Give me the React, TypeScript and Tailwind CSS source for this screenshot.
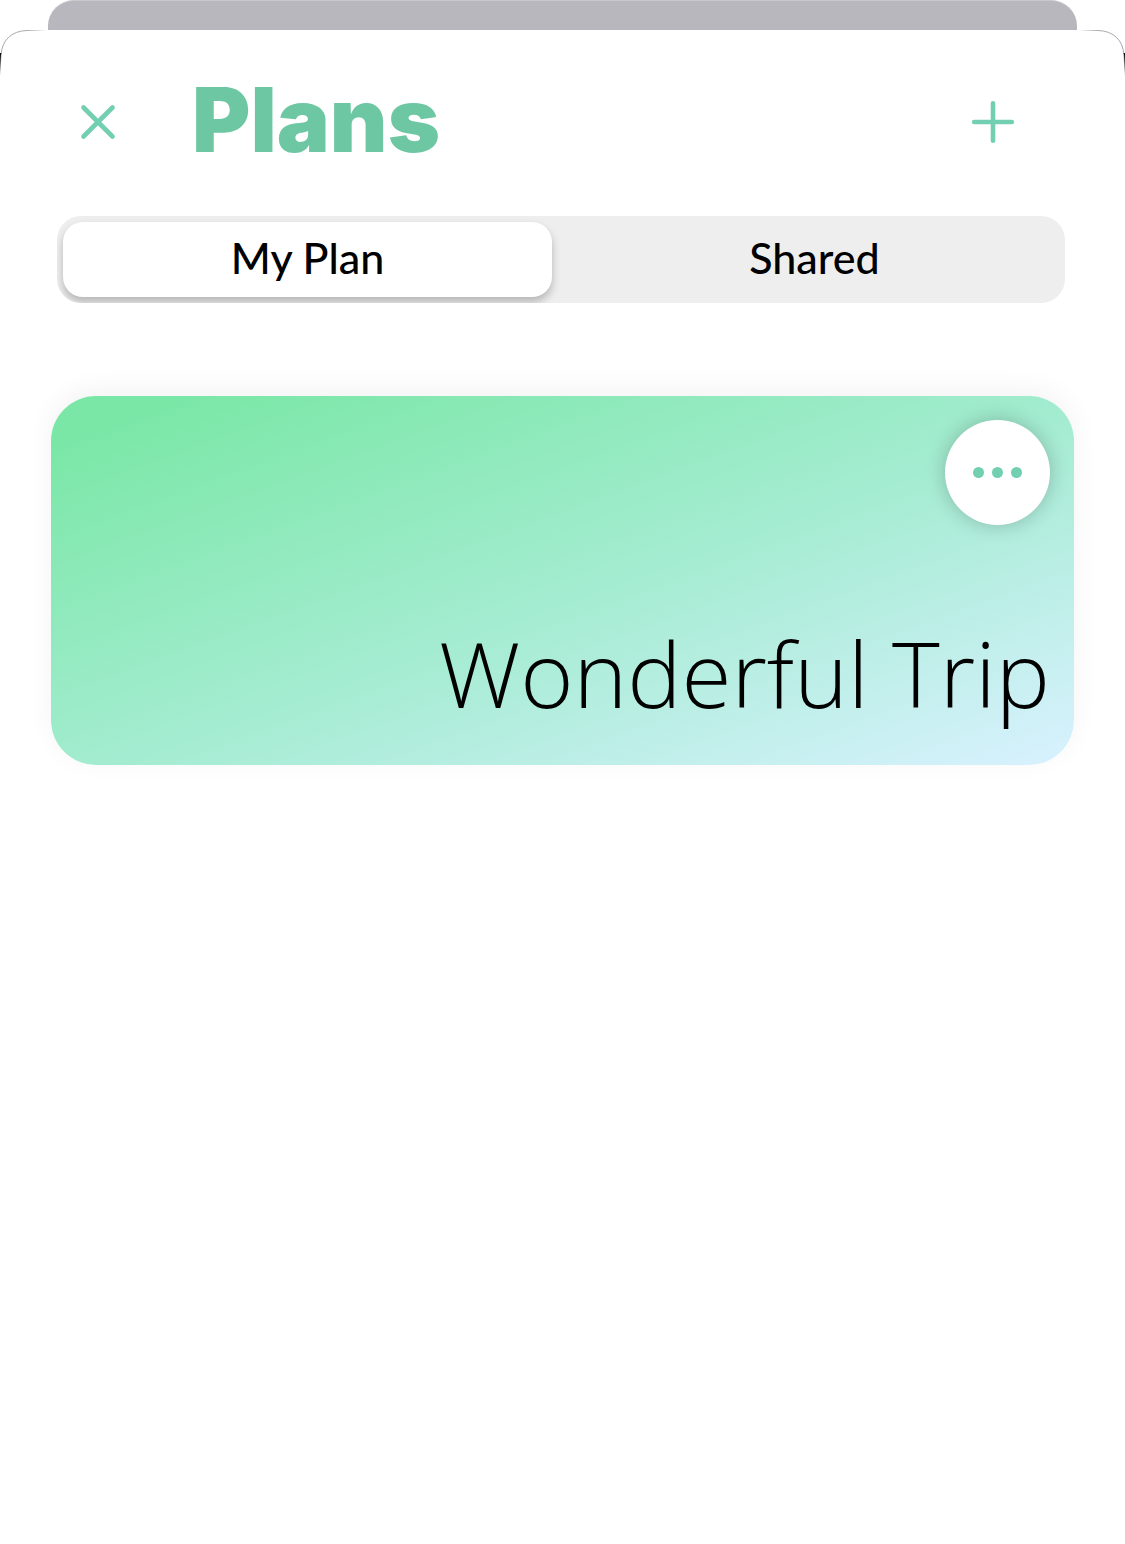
import React, { useState } from "react";

const tabs = ["My Plan", "Shared"];

function SheetCorner({ side }: { side: "left" | "right" }) {
  const id = "edge-" + side;
  return (
    <svg
      aria-hidden="true"
      viewBox="0 0 48 48"
      className={
        side === "left"
          ? "pointer-events-none absolute top-0 left-0 size-12"
          : "pointer-events-none absolute top-0 right-0 size-12 -scale-x-100"
      }
      fill="none"
    >
      <defs>
        <linearGradient id={id} x1="0" y1="0" x2="0" y2="1">
          <stop offset="0" stopColor="#000000" />
          <stop offset="1" stopColor="#000000" stopOpacity="0" />
        </linearGradient>
        <linearGradient id={id + "-top"} gradientUnits="userSpaceOnUse" x1="26" y1="0" x2="46" y2="0">
          <stop offset="0" stopColor="#a8a8a8" />
          <stop offset="1" stopColor="#a8a8a8" stopOpacity="0" />
        </linearGradient>
      </defs>
      <path d="M1.2 24C2 11 11 .8 27 .5H46" stroke={"url(#" + id + "-top)"} />
      <path d="M0 23H1.3L.6 46H0Z" fill={"url(#" + id + ")"} />
    </svg>
  );
}

export default function App() {
  const [active, setActive] = useState("My Plan");
  return (
    <div className="min-h-screen bg-white font-['Lato','Liberation_Sans',sans-serif] text-black">
      <div className="mx-12 h-[30px] rounded-t-[26px] border-t border-[#c9c8cc] bg-[#b8b7bd]" />
      <main className="relative rounded-t-[30px] bg-white px-[51px] pt-[39px]">
        <SheetCorner side="left" />
        <SheetCorner side="right" />
        <header className="flex h-[106px] items-center pr-[54px] pl-[24px]">
          <button aria-label="Close" className="flex size-[46px] items-center justify-center">
            <svg viewBox="0 0 36 36" className="size-9" fill="none" stroke="#72cfb1" strokeWidth="4.6" strokeLinecap="round">
              <path d="M3.5 3.5 32.5 32.5M32.5 3.5 3.5 32.5" />
            </svg>
          </button>
          <h1 className="mb-1 ml-[71px] flex-1 font-['Inter','Liberation_Sans',sans-serif] text-[89px] leading-[102px] font-black text-[#6dc7a2]">
            Plans
          </h1>
          <button aria-label="Add plan" className="flex size-[54px] items-center justify-center">
            <svg viewBox="0 0 44 44" className="size-11" fill="none" stroke="#72cfb1" strokeWidth="4.6" strokeLinecap="round">
              <path d="M22 3.2V40.8M3.2 22H40.8" />
            </svg>
          </button>
        </header>
        <div className="mt-[41px] mr-[9px] ml-[6px] flex h-[87px] gap-[18px] overflow-hidden rounded-[24px] bg-[#eeeeee] p-[6px]">
          {tabs.map((t) => (
            <button
              key={t}
              aria-pressed={active === t}
              onClick={() => setActive(t)}
              className={
                active === t
                  ? "flex-1 rounded-[20px] bg-white pb-[4px] text-[43px] leading-none font-medium shadow-[0_5px_8px_rgba(0,0,0,0.24)]"
                  : "flex-1 pb-[4px] text-[43px] leading-none font-medium"
              }
            >
              {t}
            </button>
          ))}
        </div>
        <article className="mt-[93px] flex h-[369px] flex-col items-end justify-between rounded-[45px] bg-[linear-gradient(160deg,#7ae7a6_6%,#a5ecd2_54%,#d6f1fd_98%)] p-6 shadow-[0_-6px_28px_rgba(0,0,0,0.05)]">
          <button aria-label="Plan options" className="flex size-[105px] items-center justify-center gap-[8px] rounded-full bg-white shadow-[0_0_20px_rgba(0,0,0,0.22)]">
            <span className="size-[11px] rounded-full bg-[#72cfb1]" />
            <span className="size-[11px] rounded-full bg-[#72cfb1]" />
            <span className="size-[11px] rounded-full bg-[#72cfb1]" />
          </button>
          <h2 className="mb-4 font-['Open_Sans','Liberation_Sans',sans-serif] text-[91px] leading-[104px] font-[360]">
            Wonderful Trip
          </h2>
        </article>
      </main>
    </div>
  );
}
